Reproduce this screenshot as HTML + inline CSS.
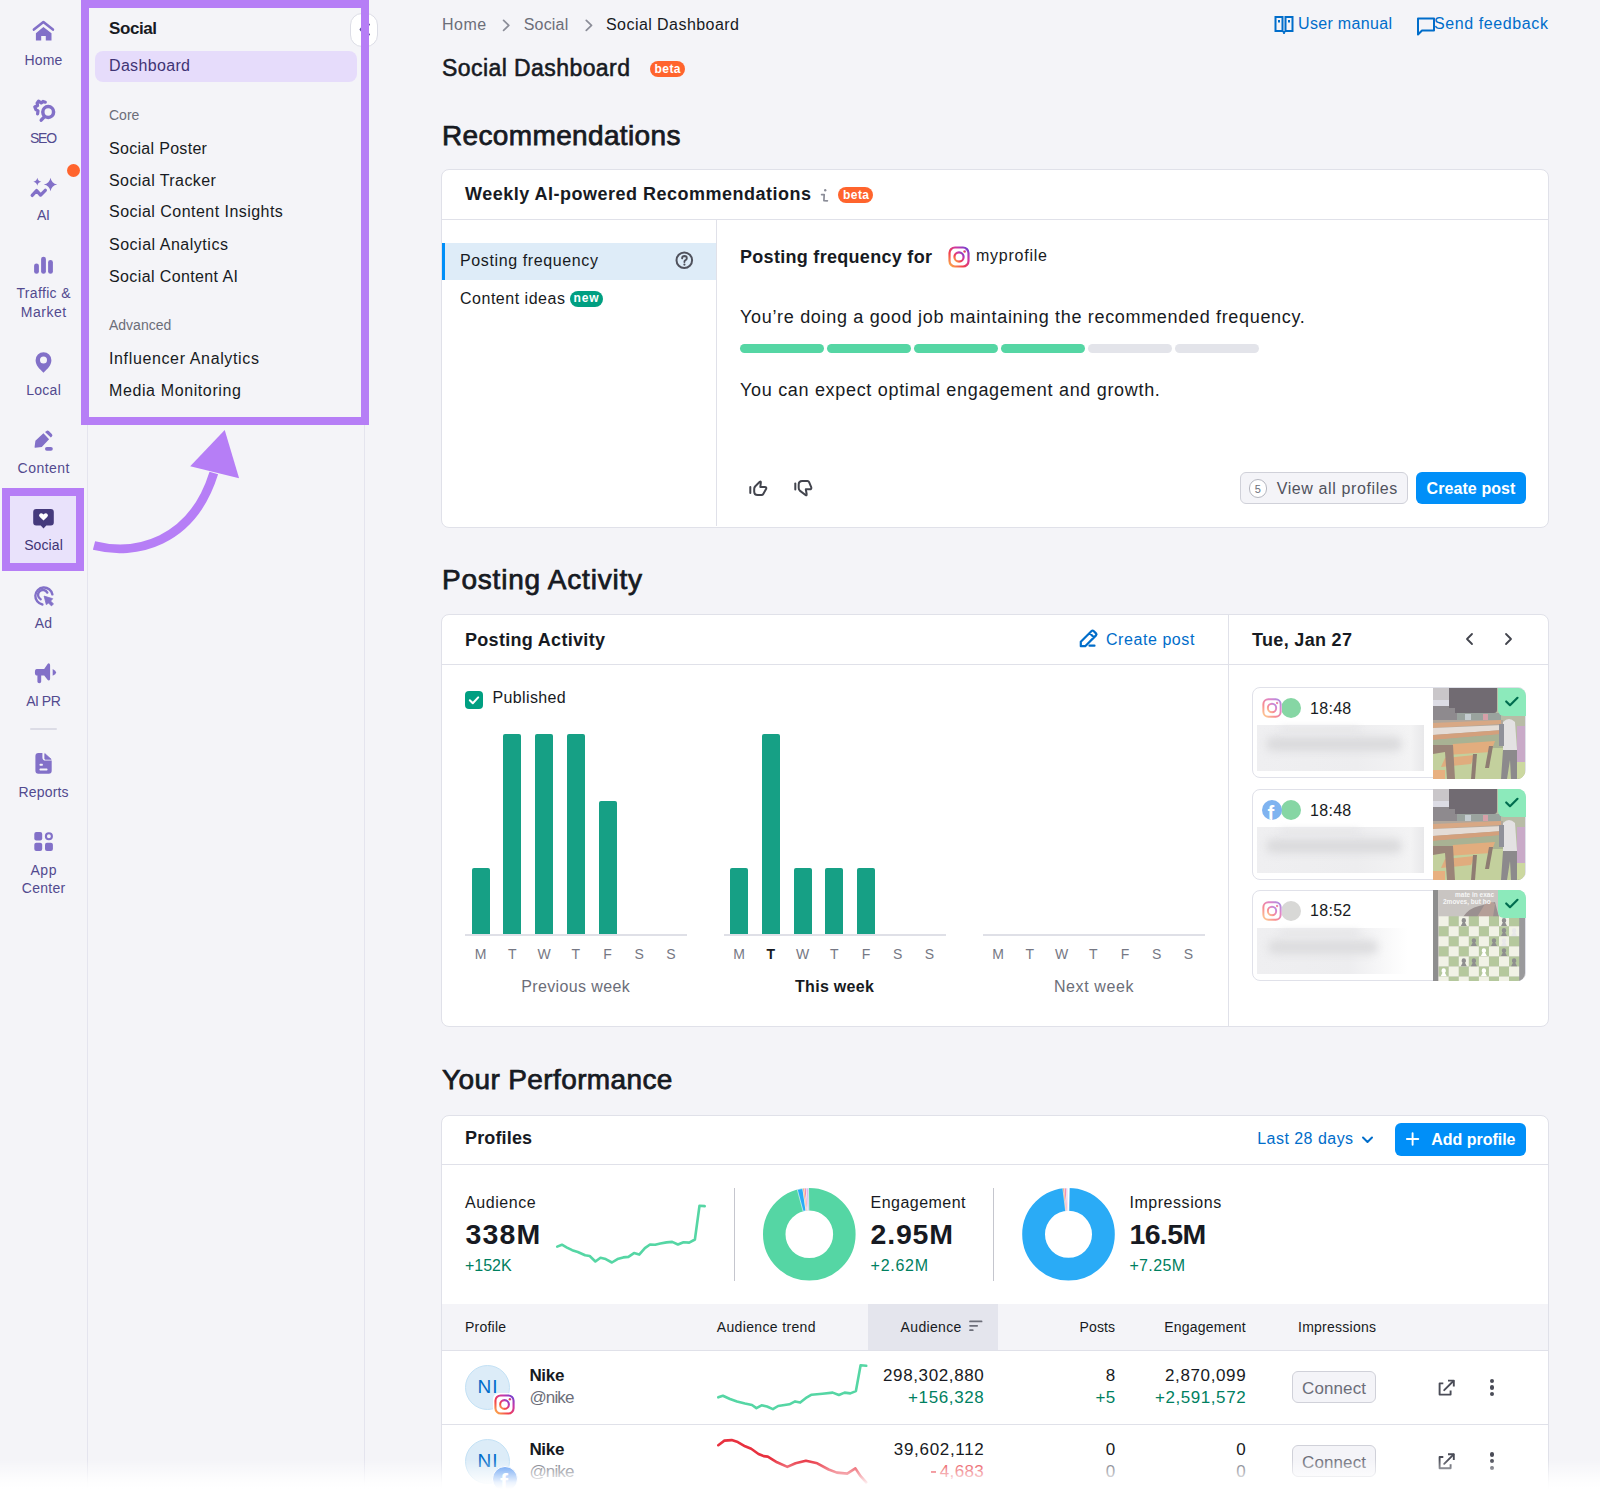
<!DOCTYPE html>
<html><head><meta charset="utf-8">
<style>
html,body{margin:0;padding:0}
body{width:1600px;height:1500px;overflow:hidden;position:relative;background:#f4f4f8;font-family:"Liberation Sans",sans-serif;}
.a{position:absolute}
.t{position:absolute;line-height:1;white-space:nowrap}
svg{overflow:visible}
</style></head><body>
<div class="a" style="left:87px;top:0px;width:1px;height:1500px;background:#e4e4ee"></div>
<div class="a" style="left:364px;top:0px;width:1px;height:1500px;background:#e4e4ee"></div>
<div class="t" style="left:24.60px;top:52.95px;font-size:14px;color:#524a8f;letter-spacing:0.157px;">Home</div>
<div class="t" style="left:29.90px;top:130.85px;font-size:14px;color:#524a8f;letter-spacing:-1.189px;">SEO</div>
<div class="t" style="left:37.10px;top:208.15px;font-size:14px;color:#524a8f;letter-spacing:-0.434px;">AI</div>
<div class="t" style="left:16.50px;top:286.15px;font-size:14px;color:#524a8f;letter-spacing:0.332px;">Traffic &amp;</div>
<div class="t" style="left:20.80px;top:304.65px;font-size:14px;color:#524a8f;letter-spacing:0.527px;">Market</div>
<div class="t" style="left:26.20px;top:383.15px;font-size:14px;color:#524a8f;letter-spacing:0.287px;">Local</div>
<div class="t" style="left:17.60px;top:461.15px;font-size:14px;color:#524a8f;letter-spacing:0.464px;">Content</div>
<div class="t" style="left:26.20px;top:694.15px;font-size:14px;color:#524a8f;letter-spacing:-0.495px;">AI PR</div>
<div class="t" style="left:34.85px;top:616.15px;font-size:14px;color:#524a8f;letter-spacing:0.175px;">Ad</div>
<div class="t" style="left:18.45px;top:784.65px;font-size:14px;color:#524a8f;letter-spacing:0.183px;">Reports</div>
<div class="t" style="left:30.45px;top:863.15px;font-size:14px;color:#524a8f;letter-spacing:0.597px;">App</div>
<div class="t" style="left:21.80px;top:881.15px;font-size:14px;color:#524a8f;letter-spacing:0.280px;">Center</div>
<div class="a" style="left:30px;top:728px;width:27px;height:2px;background:#dcdce6;border-radius:1px"></div>
<div class="a" style="left:66.5px;top:164px;width:13px;height:13px;background:#ff642d;border-radius:50%"></div>
<div class="a" style="left:2px;top:488px;width:82px;height:83px;box-sizing:border-box;border:8px solid #b67ef6;background:#e9e2fb"></div>
<div class="t" style="left:24.15px;top:538.15px;font-size:14px;color:#3f3475;letter-spacing:0.115px;">Social</div>
<div class="t" style="left:109.00px;top:20.31px;font-size:17px;color:#171a22;font-weight:bold;letter-spacing:-0.416px;">Social</div>
<div class="a" style="left:95px;top:51px;width:262px;height:31px;background:#e6dcfb;border-radius:8px"></div>
<div class="t" style="left:109.00px;top:58.16px;font-size:16px;color:#3f3475;letter-spacing:0.334px;">Dashboard</div>
<div class="t" style="left:109.00px;top:107.85px;font-size:14px;color:#6c6e79;">Core</div>
<div class="t" style="left:109.00px;top:140.66px;font-size:16px;color:#171a22;letter-spacing:0.306px;">Social Poster</div>
<div class="t" style="left:109.00px;top:172.56px;font-size:16px;color:#171a22;letter-spacing:0.428px;">Social Tracker</div>
<div class="t" style="left:109.00px;top:204.46px;font-size:16px;color:#171a22;letter-spacing:0.464px;">Social Content Insights</div>
<div class="t" style="left:109.00px;top:237.06px;font-size:16px;color:#171a22;letter-spacing:0.517px;">Social Analytics</div>
<div class="t" style="left:109.00px;top:268.96px;font-size:16px;color:#171a22;letter-spacing:0.384px;">Social Content AI</div>
<div class="t" style="left:109.00px;top:317.95px;font-size:14px;color:#6c6e79;">Advanced</div>
<div class="t" style="left:109.00px;top:351.06px;font-size:16px;color:#171a22;letter-spacing:0.633px;">Influencer Analytics</div>
<div class="t" style="left:109.00px;top:383.46px;font-size:16px;color:#171a22;letter-spacing:0.611px;">Media Monitoring</div>
<div class="a" style="left:81px;top:0px;width:288px;height:425px;box-sizing:border-box;border:8px solid #b67ef6"></div>
<div class="t" style="left:442.00px;top:17.46px;font-size:16px;color:#6c6e79;letter-spacing:0.499px;">Home</div>
<div class="t" style="left:523.70px;top:17.46px;font-size:16px;color:#6c6e79;letter-spacing:0.198px;">Social</div>
<div class="t" style="left:606.00px;top:17.46px;font-size:16px;color:#171a22;letter-spacing:0.441px;">Social Dashboard</div>
<div class="t" style="left:1298.00px;top:16.46px;font-size:16px;color:#006dca;letter-spacing:0.323px;">User manual</div>
<div class="t" style="left:1434.00px;top:16.46px;font-size:16px;color:#006dca;letter-spacing:0.598px;">Send feedback</div>
<div class="t" style="left:442.00px;top:56.93px;font-size:23px;color:#171a22;letter-spacing:0.427px;-webkit-text-stroke:0.55px #171a22;">Social Dashboard</div>
<div class="a" style="left:650px;top:61px;width:35px;height:16px;background:#ff642d;border-radius:8px"></div>
<div class="t" style="left:442.00px;top:121.70px;font-size:28px;color:#171a22;letter-spacing:0.357px;-webkit-text-stroke:0.75px #171a22;">Recommendations</div>
<div class="a" style="left:441px;top:168.5px;width:1108px;height:359px;box-sizing:border-box;border:1px solid #e0e1e9;border-radius:8px;background:#fff"></div>
<svg class="a" style="left:0px;top:0px;" width="88" height="900" viewBox="0 0 88 900">
<g fill="#8270c8" stroke="none">
 <!-- home -->
 <polyline points="33.9,29.6 43.4,22.1 52.9,29.6" fill="none" stroke="#8270c8" stroke-width="2.6" stroke-linecap="round" stroke-linejoin="round"/>
 <path d="M35.9,33.3 L43.4,27.1 L51.5,33.3 L51.5,40.6 L45.8,40.6 L45.8,35.9 L41.2,35.9 L41.2,40.6 L35.9,40.6 Z"/>
 <!-- seo -->
 <circle cx="48.2" cy="112" r="5.4" fill="none" stroke="#8270c8" stroke-width="3.5"/>
 <line x1="41.2" y1="120.2" x2="43.8" y2="117.4" stroke="#8270c8" stroke-width="3.4" stroke-linecap="round"/>
 <path d="M45.3,102.2 L43,101.4 L41.2,102.9 L38.5,101.2 L37.1,103.2 L37.6,105.5 L34.8,107 L35.9,109.6 L38,110.8 L37.6,113.9" fill="none" stroke="#8270c8" stroke-width="3.2" stroke-linecap="round" stroke-linejoin="round"/>
 <!-- ai -->
 <path d="M37.3,177.7 Q37.9,181.1 41.3,181.7 Q37.9,182.3 37.3,185.7 Q36.7,182.3 33.3,181.7 Q36.7,181.1 37.3,177.7 Z"/>
 <path d="M50.5,177.8 Q51.5,183.5 57.2,184.5 Q51.5,185.5 50.5,191.2 Q49.5,185.5 43.8,184.5 Q49.5,183.5 50.5,177.8 Z"/>
 <polyline points="32.2,195.4 36.6,190.6 40.6,195.1 45.3,190.3" fill="none" stroke="#8270c8" stroke-width="3.3" stroke-linecap="round" stroke-linejoin="round"/>
 <!-- traffic -->
 <rect x="34.1" y="263.4" width="4.8" height="10.4" rx="2.4"/>
 <rect x="41.1" y="256.7" width="4.8" height="17.1" rx="2.4"/>
 <rect x="48.1" y="259.9" width="4.8" height="13.9" rx="2.4"/>
 <!-- local -->
 <path fill-rule="evenodd" d="M43.5,372.7 C39.5,368.8 35.6,365.3 35.6,360.2 A7.9,7.9 0 0 1 51.4,360.2 C51.4,365.3 47.5,368.8 43.5,372.7 Z M43.5,356.4 A3.5,3.5 0 1 0 43.5,363.4 A3.5,3.5 0 1 0 43.5,356.4 Z"/>
 <!-- content -->
 <path d="M43.4,433.2 L49.1,439.2 L41.8,446.9 L35.2,447.7 Q34.4,447.9 34.6,447.1 L35.4,440.8 Z"/>
 <path d="M46.2,431.3 Q47.4,430 48.8,431.1 L51.8,434 Q53.1,435.4 51.9,436.6 L50.8,437.6 L45,431.9 Z"/>
 <rect x="45" y="447" width="7.8" height="3.7" rx="1.85"/>
 <!-- ad -->
 <path d="M42.4,604.5 A8.6,8.6 0 1 1 52.4,594.4" fill="none" stroke="#8270c8" stroke-width="2.4" stroke-linecap="round"/>
 <path d="M40.7,599.2 A4.9,4.9 0 1 1 47.3,592.6" fill="none" stroke="#8270c8" stroke-width="2.4" stroke-linecap="round"/>
 <path d="M44.1,596.1 L52.7,598.7 L50.6,601.1 L53.5,603.9 L51.4,605.9 L48.6,603 L46.3,604.6 Z" stroke="#8270c8" stroke-width="0.8" stroke-linejoin="round"/>
 <!-- ai pr -->
 <path d="M36.8,669.1 L44.2,669.1 L47.6,664 Q48.7,662.6 49.6,663.8 Q50.1,664.5 50.1,665.5 L50.1,678.8 Q50.1,680.4 48.9,680.6 Q48.2,680.7 47.5,679.8 L44.2,675.6 L41.2,675.6 L41.2,681.6 Q41.2,683.3 39.3,683.3 Q37.4,683.3 37.4,681.6 L37.4,675.6 Q34.9,675.6 34.9,672.4 Q34.9,669.1 36.8,669.1 Z"/>
 <path d="M52.7,668.9 Q56.1,670.5 56.1,672.4 Q56.1,674.3 52.7,675.8 Z"/>
 <!-- reports -->
 <path fill-rule="evenodd" d="M38.4,753 L42.4,753 L42.4,757.5 Q42.4,760.6 45.5,760.6 L51.7,760.6 L51.7,770.8 Q51.7,773.8 48.7,773.8 L38.4,773.8 Q35.4,773.8 35.4,770.8 L35.4,756 Q35.4,753 38.4,753 Z M40,763.7 L42.4,763.7 Q43.5,764.7 42.4,765.7 L40,765.7 Q38.9,764.7 40,763.7 Z M40,768.4 L47,768.4 Q48.1,769.4 47,770.4 L40,770.4 Q38.9,769.4 40,768.4 Z"/>
 <path d="M44.8,753.6 L51.2,759.3 L45.3,759.3 Q44.8,759.3 44.8,758.8 Z" stroke="#8270c8" stroke-width="0.8" stroke-linejoin="round"/>
 <!-- app center -->
 <rect x="34.3" y="832.1" width="7.9" height="8.3" rx="2"/>
 <circle cx="48.9" cy="836.3" r="3" fill="none" stroke="#8270c8" stroke-width="2.1"/>
 <rect x="34.3" y="842.8" width="7.9" height="8.1" rx="2"/>
 <rect x="45" y="842.8" width="7.9" height="8.1" rx="2"/>
</g>
<!-- social (active) -->
<path d="M36.2,509 L50.8,509 Q53.8,509 53.8,512 L53.8,522.5 Q53.8,525.5 50.8,525.5 L46.3,525.5 L43.5,528.4 L40.7,525.5 L36.2,525.5 Q33.2,525.5 33.2,522.5 L33.2,512 Q33.2,509 36.2,509 Z" fill="#453a7c"/>
<path d="M43.5,520.6 L39.8,517 Q38.3,515.3 39.6,513.9 Q41.2,512.5 43.5,514.4 Q45.8,512.5 47.4,513.9 Q48.7,515.3 47.2,517 Z" fill="#fff"/>
</svg>
<svg class="a" style="left:0px;top:0px;" width="260" height="600" viewBox="0 0 260 600"><path d="M94,545.5 C135,556 192,543 213.8,473" fill="none" stroke="#b67ef6" stroke-width="9"/>
<polygon points="224.7,430.1 190.2,466.2 239.1,478.2" fill="#b67ef6"/></svg>
<div class="a" style="left:350px;top:12.6px;width:28px;height:34px;box-sizing:border-box;border:1px solid #dcdde6;border-radius:12px;background:#fff;z-index:0"></div>
<svg class="a" style="left:350px;top:12px;" width="28" height="36" viewBox="0 0 28 36"><path d="M14.5,12.5 L10.5,17.5 L14.5,22.5 M19,12.5 L15,17.5 L19,22.5" fill="none" stroke="#5b4f9a" stroke-width="2" stroke-linecap="round" stroke-linejoin="round"/></svg>
<div class="a" style="left:361px;top:0;width:8px;height:425px;background:#b67ef6;z-index:2"></div>
<svg class="a" style="left:0px;top:0px;" width="700" height="40" viewBox="0 0 700 40"><path d="M503.6,20.4 L508.8,25.4 L503.6,30.4 M586.3,20.4 L591.5,25.4 L586.3,30.4" fill="none" stroke="#8b8d98" stroke-width="1.7" stroke-linecap="round" stroke-linejoin="round"/></svg>
<svg class="a" style="left:1274px;top:15px;" width="20" height="20" viewBox="0 0 20 20"><path d="M1.5,2 L8.5,2 L8.5,16 L1.5,16 Z M11.5,2 L18.5,2 L18.5,16 L11.5,16 Z" fill="none" stroke="#006dca" stroke-width="2"/><rect x="4" y="5" width="2" height="2.5" fill="#006dca"/><rect x="14" y="5" width="2" height="2.5" fill="#006dca"/><path d="M8.5,16 L10,19 L11.5,16" fill="#006dca" stroke="#006dca" stroke-width="1"/></svg>
<svg class="a" style="left:1416px;top:16px;" width="20" height="20" viewBox="0 0 20 20"><path d="M2,2.5 L18,2.5 L18,14.5 L6,14.5 L2,18.5 Z" fill="none" stroke="#006dca" stroke-width="2" stroke-linejoin="round"/></svg>
<div class="t" style="left:654.50px;top:63.34px;font-size:12px;color:#fff;font-weight:bold;letter-spacing:0.443px;">beta</div>
<div class="t" style="left:465.00px;top:185.26px;font-size:18px;color:#171a22;font-weight:bold;letter-spacing:0.495px;">Weekly AI-powered Recommendations</div>
<svg class="a" style="left:0px;top:0px;" width="1600" height="300" viewBox="0 0 1600 300"><circle cx="825.2" cy="190.3" r="1.2" fill="#8b8d98"/><path d="M821.6,194.6 L824.2,194.6 L823.9,200.6 L827.4,200.8" fill="none" stroke="#8b8d98" stroke-width="1.7" stroke-linejoin="round" stroke-linecap="round"/></svg>
<div class="a" style="left:838.2px;top:186.8px;width:35.3px;height:16px;background:#ff642d;border-radius:8px"></div>
<div class="t" style="left:843.00px;top:188.64px;font-size:12px;color:#fff;font-weight:bold;letter-spacing:0.443px;">beta</div>
<div class="a" style="left:442px;top:219px;width:1106px;height:1px;background:#e0e1e9"></div>
<div class="a" style="left:716px;top:220px;width:1px;height:306px;background:#e0e1e9"></div>
<div class="a" style="left:442px;top:243px;width:274px;height:36.5px;background:#deecf8"></div>
<div class="a" style="left:442px;top:243px;width:2.5px;height:36.5px;background:#008ff8"></div>
<div class="t" style="left:460.00px;top:253.36px;font-size:16px;color:#171a22;letter-spacing:0.614px;">Posting frequency</div>
<svg class="a" style="left:675px;top:251px;" width="19" height="19" viewBox="0 0 19 19"><circle cx="9.3" cy="9.3" r="7.8" fill="none" stroke="#50525d" stroke-width="2"/><path d="M7.1,7.4 Q7.2,5 9.5,5 Q11.8,5.1 11.8,7.2 Q11.8,8.6 10.2,9.3 Q9.4,9.8 9.4,11" fill="none" stroke="#50525d" stroke-width="1.9" stroke-linecap="round"/><circle cx="9.4" cy="13.6" r="1.1" fill="#50525d"/></svg>
<div class="t" style="left:460.00px;top:290.86px;font-size:16px;color:#171a22;letter-spacing:0.514px;">Content ideas</div>
<div class="a" style="left:569.5px;top:290.5px;width:33px;height:16px;background:#009f81;border-radius:8px"></div>
<div class="t" style="left:573.50px;top:292.14px;font-size:12px;color:#fff;font-weight:bold;letter-spacing:0.836px;">new</div>
<div class="t" style="left:740.00px;top:247.76px;font-size:18px;color:#171a22;font-weight:bold;letter-spacing:0.296px;">Posting frequency for</div>
<div class="t" style="left:976.00px;top:248.46px;font-size:16px;color:#171a22;letter-spacing:0.756px;">myprofile</div>
<div class="t" style="left:740.00px;top:307.76px;font-size:18px;color:#171a22;letter-spacing:0.680px;">You’re doing a good job maintaining the recommended frequency.</div>
<div class="a" style="left:740px;top:344px;width:84px;height:8.5px;background:#55d6a4;border-radius:5px"></div>
<div class="a" style="left:827px;top:344px;width:84px;height:8.5px;background:#55d6a4;border-radius:5px"></div>
<div class="a" style="left:914px;top:344px;width:84px;height:8.5px;background:#55d6a4;border-radius:5px"></div>
<div class="a" style="left:1001px;top:344px;width:84px;height:8.5px;background:#55d6a4;border-radius:5px"></div>
<div class="a" style="left:1088px;top:344px;width:84px;height:8.5px;background:#e3e4ea;border-radius:5px"></div>
<div class="a" style="left:1175px;top:344px;width:84px;height:8.5px;background:#e3e4ea;border-radius:5px"></div>
<div class="t" style="left:740.00px;top:380.56px;font-size:18px;color:#171a22;letter-spacing:0.688px;">You can expect optimal engagement and growth.</div>
<div class="a" style="left:1240px;top:472px;width:167.5px;height:32px;box-sizing:border-box;border:1px solid #d0d1d9;border-radius:6px;background:#f4f4f8"></div>
<div class="a" style="left:1248.5px;top:479px;width:18.5px;height:18.5px;box-sizing:border-box;border:1px solid #b5b7c0;border-radius:50%;background:#fff"></div>
<div class="t" style="left:1254.74px;top:483.69px;font-size:11px;color:#6c6e79;">5</div>
<div class="t" style="left:1276.70px;top:481.36px;font-size:16px;color:#50525d;letter-spacing:0.613px;">View all profiles</div>
<div class="a" style="left:1416px;top:472px;width:110px;height:32px;background:#008ff8;border-radius:6px"></div>
<div class="t" style="left:1426.50px;top:481.36px;font-size:16px;color:#fff;font-weight:bold;letter-spacing:0.091px;">Create post</div>
<div class="t" style="left:442.00px;top:565.80px;font-size:28px;color:#171a22;letter-spacing:0.779px;-webkit-text-stroke:0.75px #171a22;">Posting Activity</div>
<div class="a" style="left:441px;top:613.5px;width:1108px;height:413.5px;box-sizing:border-box;border:1px solid #e0e1e9;border-radius:8px;background:#fff"></div>
<div class="a" style="left:442px;top:664px;width:1106px;height:1px;background:#e0e1e9"></div>
<div class="a" style="left:1228px;top:614.5px;width:1px;height:412px;background:#e0e1e9"></div>
<div class="t" style="left:465.00px;top:630.51px;font-size:18px;color:#171a22;font-weight:bold;letter-spacing:0.307px;">Posting Activity</div>
<svg class="a" style="left:1078px;top:628px;" width="22" height="22" viewBox="0 0 22 22"><path d="M2.8,18.2 L2.8,13.8 L13.6,3 Q14.6,2 15.6,3 L18,5.4 Q19,6.4 18,7.4 L7.2,18.2 Z M11.8,5.2 L15.8,9.2" fill="none" stroke="#006dca" stroke-width="2.2" stroke-linejoin="round"/><path d="M11.5,17.7 L16.5,17.7" stroke="#006dca" stroke-width="2.2" stroke-linecap="round"/></svg>
<div class="t" style="left:1106.00px;top:631.96px;font-size:16px;color:#006dca;letter-spacing:0.562px;">Create post</div>
<div class="t" style="left:1252.00px;top:630.86px;font-size:18px;color:#171a22;font-weight:bold;letter-spacing:0.325px;">Tue, Jan 27</div>
<svg class="a" style="left:1460px;top:628px;" width="60" height="22" viewBox="0 0 60 22"><path d="M12,6 L7,11 L12,16 M46,6 L51,11 L46,16" fill="none" stroke="#42444d" stroke-width="1.8" stroke-linecap="round" stroke-linejoin="round"/></svg>
<div class="a" style="left:464.5px;top:690.5px;width:18px;height:18px;background:#009f81;border-radius:4px"></div>
<svg class="a" style="left:464.5px;top:690.5px;" width="18" height="18" viewBox="0 0 18 18"><path d="M4.8,9.2 L7.8,12.2 L13.2,6.4" fill="none" stroke="#fff" stroke-width="2" stroke-linecap="round" stroke-linejoin="round"/></svg>
<div class="t" style="left:492.50px;top:690.21px;font-size:16px;color:#171a22;letter-spacing:0.365px;">Published</div>
<div class="a" style="left:464.5px;top:934px;width:222.5px;height:2px;background:#dfe0e7"></div>
<div class="a" style="left:471.5px;top:867.5px;width:18px;height:66.5px;background:#16a085;border-radius:2px 2px 0 0"></div>
<div class="a" style="left:503.25px;top:734px;width:18px;height:200px;background:#16a085;border-radius:2px 2px 0 0"></div>
<div class="a" style="left:535.0px;top:734px;width:18px;height:200px;background:#16a085;border-radius:2px 2px 0 0"></div>
<div class="a" style="left:566.75px;top:734px;width:18px;height:200px;background:#16a085;border-radius:2px 2px 0 0"></div>
<div class="a" style="left:598.5px;top:801px;width:18px;height:133px;background:#16a085;border-radius:2px 2px 0 0"></div>
<div class="t" style="left:474.67px;top:946.95px;font-size:14px;color:#767884;">M</div>
<div class="t" style="left:507.98px;top:946.95px;font-size:14px;color:#767884;">T</div>
<div class="t" style="left:537.39px;top:946.95px;font-size:14px;color:#767884;">W</div>
<div class="t" style="left:571.48px;top:946.95px;font-size:14px;color:#767884;">T</div>
<div class="t" style="left:603.23px;top:946.95px;font-size:14px;color:#767884;">F</div>
<div class="t" style="left:634.58px;top:946.95px;font-size:14px;color:#767884;">S</div>
<div class="t" style="left:666.33px;top:946.95px;font-size:14px;color:#767884;">S</div>
<div class="t" style="left:521.15px;top:978.66px;font-size:16px;color:#6c6e79;letter-spacing:0.383px;">Previous week</div>
<div class="a" style="left:723.5px;top:934px;width:222.5px;height:2px;background:#dfe0e7"></div>
<div class="a" style="left:730.0px;top:867.5px;width:18px;height:66.5px;background:#16a085;border-radius:2px 2px 0 0"></div>
<div class="a" style="left:761.75px;top:734px;width:18px;height:200px;background:#16a085;border-radius:2px 2px 0 0"></div>
<div class="a" style="left:793.5px;top:867.5px;width:18px;height:66.5px;background:#16a085;border-radius:2px 2px 0 0"></div>
<div class="a" style="left:825.25px;top:867.5px;width:18px;height:66.5px;background:#16a085;border-radius:2px 2px 0 0"></div>
<div class="a" style="left:857.0px;top:867.5px;width:18px;height:66.5px;background:#16a085;border-radius:2px 2px 0 0"></div>
<div class="t" style="left:733.17px;top:946.95px;font-size:14px;color:#767884;">M</div>
<div class="t" style="left:766.48px;top:946.95px;font-size:14px;color:#171a22;font-weight:bold;">T</div>
<div class="t" style="left:795.89px;top:946.95px;font-size:14px;color:#767884;">W</div>
<div class="t" style="left:829.98px;top:946.95px;font-size:14px;color:#767884;">T</div>
<div class="t" style="left:861.73px;top:946.95px;font-size:14px;color:#767884;">F</div>
<div class="t" style="left:893.08px;top:946.95px;font-size:14px;color:#767884;">S</div>
<div class="t" style="left:924.83px;top:946.95px;font-size:14px;color:#767884;">S</div>
<div class="t" style="left:795.00px;top:978.66px;font-size:16px;color:#171a22;font-weight:bold;letter-spacing:0.307px;">This week</div>
<div class="a" style="left:982.5px;top:934px;width:222.5px;height:2px;background:#dfe0e7"></div>
<div class="t" style="left:992.17px;top:946.95px;font-size:14px;color:#767884;">M</div>
<div class="t" style="left:1025.48px;top:946.95px;font-size:14px;color:#767884;">T</div>
<div class="t" style="left:1054.89px;top:946.95px;font-size:14px;color:#767884;">W</div>
<div class="t" style="left:1088.98px;top:946.95px;font-size:14px;color:#767884;">T</div>
<div class="t" style="left:1120.73px;top:946.95px;font-size:14px;color:#767884;">F</div>
<div class="t" style="left:1152.08px;top:946.95px;font-size:14px;color:#767884;">S</div>
<div class="t" style="left:1183.83px;top:946.95px;font-size:14px;color:#767884;">S</div>
<div class="t" style="left:1053.95px;top:978.66px;font-size:16px;color:#6c6e79;letter-spacing:0.594px;">Next week</div>
<svg class="a" style="left:0px;top:0px;" width="1" height="1" viewBox="0 0 1 1"><defs><linearGradient id="igg" x1="0" y1="1" x2="1" y2="0"><stop offset="0" stop-color="#fdb44b"/><stop offset="0.35" stop-color="#f2404d"/><stop offset="0.7" stop-color="#c937a7"/><stop offset="1" stop-color="#6443d6"/></linearGradient></defs></svg>
<svg class="a" style="left:948px;top:245.5px;" width="22" height="22" viewBox="0 0 22 22"><g transform="scale(1.0)" opacity="1.0"><rect x="1.5" y="1.5" width="19" height="19" rx="5.5" fill="none" stroke="url(#igg)" stroke-width="2.2"/><circle cx="11" cy="11" r="4.6" fill="none" stroke="url(#igg)" stroke-width="2.2"/><circle cx="16.6" cy="5.5" r="1.3" fill="url(#igg)"/></g></svg>
<div class="a" style="left:1251.5px;top:687px;width:274px;height:91px;box-sizing:border-box;border:1px solid #e0e1e9;border-radius:8px;background:#fff"></div>
<div class="a" style="left:1257px;top:725px;width:167px;height:46px;background:linear-gradient(90deg,#efeff1,#ededef 60%,#f3f3f4 92%,#e8e8ea 100%);"></div>
<div class="a" style="left:1266px;top:737px;width:136px;height:14px;background:#dadadc;border-radius:7px;filter:blur(4px)"></div>
<div class="a" style="left:1280px;top:727px;width:80px;height:6px;background:#e6e6e8;border-radius:3px;filter:blur(3px)"></div>
<div class="a" style="left:1281px;top:698px;width:20px;height:20px;background:#86d6a4;border-radius:50%"></div>
<div class="a" style="left:1261px;top:697.5px;width:21px;height:21px;background:#fff;border-radius:6px"></div>
<svg class="a" style="left:1262px;top:698px;" width="20" height="20" viewBox="0 0 20 20"><g transform="scale(0.9090909090909091)" opacity="0.6"><rect x="1.5" y="1.5" width="19" height="19" rx="5.5" fill="none" stroke="url(#igg)" stroke-width="2.2"/><circle cx="11" cy="11" r="4.6" fill="none" stroke="url(#igg)" stroke-width="2.2"/><circle cx="16.6" cy="5.5" r="1.3" fill="url(#igg)"/></g></svg>
<div class="t" style="left:1310.00px;top:700.86px;font-size:16px;color:#171a22;letter-spacing:0.305px;">18:48</div>
<div class="a" style="left:1433px;top:687.5px;width:92px;height:91px;overflow:hidden;border-radius:0 8px 8px 0"><svg width="92" height="91" viewBox="0 0 92 91" style="display:block">
<rect x="0" y="0" width="92" height="91" fill="#b8bca6"/>
<rect x="0" y="0" width="18" height="26" fill="#c9c6c9"/>
<rect x="0" y="12" width="22" height="6" fill="#dcdce4"/>
<rect x="0" y="18" width="24" height="14" fill="#8e8a8e"/>
<path d="M16,0 H64 V22 Q64,25 61,25 H22 V20 H16 Z" fill="#716b72"/>
<rect x="24" y="25" width="44" height="10" fill="#9aa39e"/>
<rect x="32" y="26" width="6" height="9" fill="#c4ccd0"/>
<rect x="50" y="26" width="5" height="9" fill="#d6a0a8"/>
<rect x="0" y="32" width="70" height="20" fill="#b1a79c"/>
<path d="M0,35 L68,32 L68,36 L0,40 Z" fill="#d8a884"/>
<path d="M0,40 L70,37 L70,42 L0,47 Z" fill="#e4dcd6"/>
<path d="M0,47 L70,42 L70,46 L0,52 Z" fill="#d3a07c"/>
<path d="M0,52 L70,46 L70,60 L0,64 Z" fill="#a9b293"/>
<rect x="0" y="60" width="92" height="31" fill="#c3d09d"/>
<path d="M20,56 L62,53 L58,64 L14,67 Z" fill="#e2ad7e"/>
<path d="M12,70 L42,67 L38,76 L8,79 Z" fill="#e0ac7e"/>
<path d="M0,57 L20,57 L22,91 L14,91 L12,64 L0,66 Z" fill="#9a8478"/>
<path d="M40,66 L44,66 L42,91 L38,91 Z" fill="#8e7c72"/>
<path d="M56,58 L60,58 L56,80 L52,80 Z" fill="#8e7c72"/>
<rect x="0" y="82" width="12" height="9" fill="#e8b080"/>
<path d="M70,34 Q76,28 82,34 L84,62 L70,62 Z" fill="#e3e1e2"/>
<rect x="66" y="36" width="5" height="22" fill="#8f9099"/>
<path d="M70,62 L84,62 L86,91 L78,91 L77,72 L74,91 L68,91 Z" fill="#8c8a8c"/>
<rect x="84" y="38" width="8" height="36" fill="#c9aac8"/>
<rect x="84" y="74" width="8" height="17" fill="#ccd8a0"/>
</svg></div>
<div class="a" style="left:1497.5px;top:687.5px;width:28px;height:28px;background:#8ceabb;border-radius:0 8px 0 6px"></div>
<svg class="a" style="left:1497.5px;top:687.5px;" width="28" height="28" viewBox="0 0 28 28"><path d="M8.2,13.5 L12,17.2 L19.5,9.8" fill="none" stroke="#006d4f" stroke-width="2.2" stroke-linecap="round" stroke-linejoin="round"/></svg>
<div class="a" style="left:1251.5px;top:788.8px;width:274px;height:91px;box-sizing:border-box;border:1px solid #e0e1e9;border-radius:8px;background:#fff"></div>
<div class="a" style="left:1257px;top:826.8px;width:167px;height:46px;background:linear-gradient(90deg,#efeff1,#ededef 60%,#f3f3f4 92%,#e8e8ea 100%);"></div>
<div class="a" style="left:1266px;top:838.8px;width:136px;height:14px;background:#dadadc;border-radius:7px;filter:blur(4px)"></div>
<div class="a" style="left:1280px;top:828.8px;width:80px;height:6px;background:#e6e6e8;border-radius:3px;filter:blur(3px)"></div>
<div class="a" style="left:1281px;top:799.8px;width:20px;height:20px;background:#86d6a4;border-radius:50%"></div>
<div class="a" style="left:1262px;top:799.8px;width:20px;height:20px;border-radius:50%;background:#7fb3f0;overflow:hidden"><div class="t" style="left:5.5px;top:3px;font-size:20px;font-weight:bold;color:#fff;line-height:20px">f</div></div>
<div class="t" style="left:1310.00px;top:802.66px;font-size:16px;color:#171a22;letter-spacing:0.305px;">18:48</div>
<div class="a" style="left:1433px;top:789.3px;width:92px;height:91px;overflow:hidden;border-radius:0 8px 8px 0"><svg width="92" height="91" viewBox="0 0 92 91" style="display:block">
<rect x="0" y="0" width="92" height="91" fill="#b8bca6"/>
<rect x="0" y="0" width="18" height="26" fill="#c9c6c9"/>
<rect x="0" y="12" width="22" height="6" fill="#dcdce4"/>
<rect x="0" y="18" width="24" height="14" fill="#8e8a8e"/>
<path d="M16,0 H64 V22 Q64,25 61,25 H22 V20 H16 Z" fill="#716b72"/>
<rect x="24" y="25" width="44" height="10" fill="#9aa39e"/>
<rect x="32" y="26" width="6" height="9" fill="#c4ccd0"/>
<rect x="50" y="26" width="5" height="9" fill="#d6a0a8"/>
<rect x="0" y="32" width="70" height="20" fill="#b1a79c"/>
<path d="M0,35 L68,32 L68,36 L0,40 Z" fill="#d8a884"/>
<path d="M0,40 L70,37 L70,42 L0,47 Z" fill="#e4dcd6"/>
<path d="M0,47 L70,42 L70,46 L0,52 Z" fill="#d3a07c"/>
<path d="M0,52 L70,46 L70,60 L0,64 Z" fill="#a9b293"/>
<rect x="0" y="60" width="92" height="31" fill="#c3d09d"/>
<path d="M20,56 L62,53 L58,64 L14,67 Z" fill="#e2ad7e"/>
<path d="M12,70 L42,67 L38,76 L8,79 Z" fill="#e0ac7e"/>
<path d="M0,57 L20,57 L22,91 L14,91 L12,64 L0,66 Z" fill="#9a8478"/>
<path d="M40,66 L44,66 L42,91 L38,91 Z" fill="#8e7c72"/>
<path d="M56,58 L60,58 L56,80 L52,80 Z" fill="#8e7c72"/>
<rect x="0" y="82" width="12" height="9" fill="#e8b080"/>
<path d="M70,34 Q76,28 82,34 L84,62 L70,62 Z" fill="#e3e1e2"/>
<rect x="66" y="36" width="5" height="22" fill="#8f9099"/>
<path d="M70,62 L84,62 L86,91 L78,91 L77,72 L74,91 L68,91 Z" fill="#8c8a8c"/>
<rect x="84" y="38" width="8" height="36" fill="#c9aac8"/>
<rect x="84" y="74" width="8" height="17" fill="#ccd8a0"/>
</svg></div>
<div class="a" style="left:1497.5px;top:789.3px;width:28px;height:28px;background:#8ceabb;border-radius:0 8px 0 6px"></div>
<svg class="a" style="left:1497.5px;top:789.3px;" width="28" height="28" viewBox="0 0 28 28"><path d="M8.2,13.5 L12,17.2 L19.5,9.8" fill="none" stroke="#006d4f" stroke-width="2.2" stroke-linecap="round" stroke-linejoin="round"/></svg>
<div class="a" style="left:1251.5px;top:889.6px;width:274px;height:91px;box-sizing:border-box;border:1px solid #e0e1e9;border-radius:8px;background:#fff"></div>
<div class="a" style="left:1257px;top:927.6px;width:167px;height:46px;background:linear-gradient(90deg,#efeff1 0,#ededef 55%,rgba(255,255,255,0) 90%);"></div>
<div class="a" style="left:1268px;top:939.6px;width:110px;height:14px;background:#dcdcde;border-radius:7px;filter:blur(4px)"></div>
<div class="a" style="left:1280px;top:929.6px;width:80px;height:6px;background:#e6e6e8;border-radius:3px;filter:blur(3px)"></div>
<div class="a" style="left:1281px;top:900.6px;width:20px;height:20px;background:#d8d8d6;border-radius:50%"></div>
<div class="a" style="left:1261px;top:900.1px;width:21px;height:21px;background:#fff;border-radius:6px"></div>
<svg class="a" style="left:1262px;top:900.6px;" width="20" height="20" viewBox="0 0 20 20"><g transform="scale(0.9090909090909091)" opacity="0.6"><rect x="1.5" y="1.5" width="19" height="19" rx="5.5" fill="none" stroke="url(#igg)" stroke-width="2.2"/><circle cx="11" cy="11" r="4.6" fill="none" stroke="url(#igg)" stroke-width="2.2"/><circle cx="16.6" cy="5.5" r="1.3" fill="url(#igg)"/></g></svg>
<div class="t" style="left:1310.00px;top:903.46px;font-size:16px;color:#171a22;letter-spacing:0.305px;">18:52</div>
<div class="a" style="left:1433px;top:890.1px;width:92px;height:91px;overflow:hidden;border-radius:0 8px 8px 0"><svg width="92" height="91" viewBox="0 0 92 91" style="display:block">
<rect x="0" y="0" width="92" height="91" fill="#c6c2bf"/>
<rect x="0" y="0" width="92" height="27" fill="#c9c5c2"/>
<path d="M30,27 Q36,18 46,16 L62,12 L66,27 Z" fill="#9a9090"/>
<path d="M44,27 L52,14 Q58,10 62,14 L60,27 Z" fill="#b59f98"/>
<rect x="0" y="0" width="5" height="91" fill="#8e8e8e"/>
<rect x="86" y="27" width="6" height="64" fill="#9a9a9c"/>
<rect x="5.70" y="26.30" width="10.1" height="10.1" fill="#f1f2e6"/><rect x="15.75" y="26.30" width="10.1" height="10.1" fill="#b5c89d"/><rect x="25.80" y="26.30" width="10.1" height="10.1" fill="#f1f2e6"/><rect x="35.85" y="26.30" width="10.1" height="10.1" fill="#b5c89d"/><rect x="45.90" y="26.30" width="10.1" height="10.1" fill="#f1f2e6"/><rect x="55.95" y="26.30" width="10.1" height="10.1" fill="#b5c89d"/><rect x="66.00" y="26.30" width="10.1" height="10.1" fill="#f1f2e6"/><rect x="76.05" y="26.30" width="10.1" height="10.1" fill="#b5c89d"/><rect x="5.70" y="36.35" width="10.1" height="10.1" fill="#b5c89d"/><rect x="15.75" y="36.35" width="10.1" height="10.1" fill="#f1f2e6"/><rect x="25.80" y="36.35" width="10.1" height="10.1" fill="#b5c89d"/><rect x="35.85" y="36.35" width="10.1" height="10.1" fill="#f1f2e6"/><rect x="45.90" y="36.35" width="10.1" height="10.1" fill="#b5c89d"/><rect x="55.95" y="36.35" width="10.1" height="10.1" fill="#f1f2e6"/><rect x="66.00" y="36.35" width="10.1" height="10.1" fill="#b5c89d"/><rect x="76.05" y="36.35" width="10.1" height="10.1" fill="#f1f2e6"/><rect x="5.70" y="46.40" width="10.1" height="10.1" fill="#f1f2e6"/><rect x="15.75" y="46.40" width="10.1" height="10.1" fill="#b5c89d"/><rect x="25.80" y="46.40" width="10.1" height="10.1" fill="#f1f2e6"/><rect x="35.85" y="46.40" width="10.1" height="10.1" fill="#b5c89d"/><rect x="45.90" y="46.40" width="10.1" height="10.1" fill="#f1f2e6"/><rect x="55.95" y="46.40" width="10.1" height="10.1" fill="#b5c89d"/><rect x="66.00" y="46.40" width="10.1" height="10.1" fill="#f1f2e6"/><rect x="76.05" y="46.40" width="10.1" height="10.1" fill="#b5c89d"/><rect x="5.70" y="56.45" width="10.1" height="10.1" fill="#b5c89d"/><rect x="15.75" y="56.45" width="10.1" height="10.1" fill="#f1f2e6"/><rect x="25.80" y="56.45" width="10.1" height="10.1" fill="#b5c89d"/><rect x="35.85" y="56.45" width="10.1" height="10.1" fill="#f1f2e6"/><rect x="45.90" y="56.45" width="10.1" height="10.1" fill="#b5c89d"/><rect x="55.95" y="56.45" width="10.1" height="10.1" fill="#f1f2e6"/><rect x="66.00" y="56.45" width="10.1" height="10.1" fill="#b5c89d"/><rect x="76.05" y="56.45" width="10.1" height="10.1" fill="#f1f2e6"/><rect x="5.70" y="66.50" width="10.1" height="10.1" fill="#f1f2e6"/><rect x="15.75" y="66.50" width="10.1" height="10.1" fill="#b5c89d"/><rect x="25.80" y="66.50" width="10.1" height="10.1" fill="#f1f2e6"/><rect x="35.85" y="66.50" width="10.1" height="10.1" fill="#b5c89d"/><rect x="45.90" y="66.50" width="10.1" height="10.1" fill="#f1f2e6"/><rect x="55.95" y="66.50" width="10.1" height="10.1" fill="#b5c89d"/><rect x="66.00" y="66.50" width="10.1" height="10.1" fill="#f1f2e6"/><rect x="76.05" y="66.50" width="10.1" height="10.1" fill="#b5c89d"/><rect x="5.70" y="76.55" width="10.1" height="10.1" fill="#b5c89d"/><rect x="15.75" y="76.55" width="10.1" height="10.1" fill="#f1f2e6"/><rect x="25.80" y="76.55" width="10.1" height="10.1" fill="#b5c89d"/><rect x="35.85" y="76.55" width="10.1" height="10.1" fill="#f1f2e6"/><rect x="45.90" y="76.55" width="10.1" height="10.1" fill="#b5c89d"/><rect x="55.95" y="76.55" width="10.1" height="10.1" fill="#f1f2e6"/><rect x="66.00" y="76.55" width="10.1" height="10.1" fill="#b5c89d"/><rect x="76.05" y="76.55" width="10.1" height="10.1" fill="#f1f2e6"/><rect x="5.70" y="86.60" width="10.1" height="10.1" fill="#f1f2e6"/><rect x="15.75" y="86.60" width="10.1" height="10.1" fill="#b5c89d"/><rect x="25.80" y="86.60" width="10.1" height="10.1" fill="#f1f2e6"/><rect x="35.85" y="86.60" width="10.1" height="10.1" fill="#b5c89d"/><rect x="45.90" y="86.60" width="10.1" height="10.1" fill="#f1f2e6"/><rect x="55.95" y="86.60" width="10.1" height="10.1" fill="#b5c89d"/><rect x="66.00" y="86.60" width="10.1" height="10.1" fill="#f1f2e6"/><rect x="76.05" y="86.60" width="10.1" height="10.1" fill="#b5c89d"/><path d="M30.8,28.1 q2.2,0 2.2,2.4 q0,1.4 -1,2 l1.8,3.5 h-6 l1.8,-3.5 q-1,-0.6 -1,-2 q0,-2.4 2.2,-2.4 z" fill="#8f8f8f"/><path d="M71.0,28.1 q2.2,0 2.2,2.4 q0,1.4 -1,2 l1.8,3.5 h-6 l1.8,-3.5 q-1,-0.6 -1,-2 q0,-2.4 2.2,-2.4 z" fill="#8f8f8f"/><path d="M71.0,38.1 q2.2,0 2.2,2.4 q0,1.4 -1,2 l1.8,3.5 h-6 l1.8,-3.5 q-1,-0.6 -1,-2 q0,-2.4 2.2,-2.4 z" fill="#8f8f8f"/><path d="M81.1,38.1 q2.2,0 2.2,2.4 q0,1.4 -1,2 l1.8,3.5 h-6 l1.8,-3.5 q-1,-0.6 -1,-2 q0,-2.4 2.2,-2.4 z" fill="#e8e8e8"/><path d="M40.9,48.2 q2.2,0 2.2,2.4 q0,1.4 -1,2 l1.8,3.5 h-6 l1.8,-3.5 q-1,-0.6 -1,-2 q0,-2.4 2.2,-2.4 z" fill="#8f8f8f"/><path d="M61.0,48.2 q2.2,0 2.2,2.4 q0,1.4 -1,2 l1.8,3.5 h-6 l1.8,-3.5 q-1,-0.6 -1,-2 q0,-2.4 2.2,-2.4 z" fill="#8f8f8f"/><path d="M71.0,48.2 q2.2,0 2.2,2.4 q0,1.4 -1,2 l1.8,3.5 h-6 l1.8,-3.5 q-1,-0.6 -1,-2 q0,-2.4 2.2,-2.4 z" fill="#e8e8e8"/><path d="M50.9,58.2 q2.2,0 2.2,2.4 q0,1.4 -1,2 l1.8,3.5 h-6 l1.8,-3.5 q-1,-0.6 -1,-2 q0,-2.4 2.2,-2.4 z" fill="#ffffff"/><path d="M71.0,58.2 q2.2,0 2.2,2.4 q0,1.4 -1,2 l1.8,3.5 h-6 l1.8,-3.5 q-1,-0.6 -1,-2 q0,-2.4 2.2,-2.4 z" fill="#8f8f8f"/><path d="M30.8,68.3 q2.2,0 2.2,2.4 q0,1.4 -1,2 l1.8,3.5 h-6 l1.8,-3.5 q-1,-0.6 -1,-2 q0,-2.4 2.2,-2.4 z" fill="#8f8f8f"/><path d="M40.9,68.3 q2.2,0 2.2,2.4 q0,1.4 -1,2 l1.8,3.5 h-6 l1.8,-3.5 q-1,-0.6 -1,-2 q0,-2.4 2.2,-2.4 z" fill="#8f8f8f"/><path d="M81.1,68.3 q2.2,0 2.2,2.4 q0,1.4 -1,2 l1.8,3.5 h-6 l1.8,-3.5 q-1,-0.6 -1,-2 q0,-2.4 2.2,-2.4 z" fill="#8f8f8f"/><path d="M10.7,78.3 q2.2,0 2.2,2.4 q0,1.4 -1,2 l1.8,3.5 h-6 l1.8,-3.5 q-1,-0.6 -1,-2 q0,-2.4 2.2,-2.4 z" fill="#ffffff"/><path d="M50.9,78.3 q2.2,0 2.2,2.4 q0,1.4 -1,2 l1.8,3.5 h-6 l1.8,-3.5 q-1,-0.6 -1,-2 q0,-2.4 2.2,-2.4 z" fill="#ffffff"/>
<text x="22" y="6.5" font-size="6.5" font-weight="bold" fill="#f6f6f6" font-family="Liberation Sans">mate in exac</text>
<text x="10" y="14" font-size="6.5" font-weight="bold" fill="#f6f6f6" font-family="Liberation Sans">2moves, but ho</text>
</svg></div>
<div class="a" style="left:1497.5px;top:890.1px;width:28px;height:28px;background:#8ceabb;border-radius:0 8px 0 6px"></div>
<svg class="a" style="left:1497.5px;top:890.1px;" width="28" height="28" viewBox="0 0 28 28"><path d="M8.2,13.5 L12,17.2 L19.5,9.8" fill="none" stroke="#006d4f" stroke-width="2.2" stroke-linecap="round" stroke-linejoin="round"/></svg>
<div class="t" style="left:442.00px;top:1065.70px;font-size:28px;color:#171a22;letter-spacing:0.386px;-webkit-text-stroke:0.75px #171a22;">Your Performance</div>
<div class="a" style="left:441px;top:1114.5px;width:1108px;height:400px;box-sizing:border-box;border:1px solid #e0e1e9;border-radius:8px;background:#fff"></div>
<div class="a" style="left:442px;top:1163.5px;width:1106px;height:1px;background:#e0e1e9"></div>
<div class="t" style="left:465.00px;top:1128.51px;font-size:18px;color:#171a22;font-weight:bold;letter-spacing:0.153px;">Profiles</div>
<div class="t" style="left:1257.20px;top:1131.46px;font-size:16px;color:#006dca;letter-spacing:0.473px;">Last 28 days</div>
<svg class="a" style="left:1360px;top:1132px;" width="16" height="16" viewBox="0 0 16 16"><path d="M3,5.5 L7.5,10 L12,5.5" fill="none" stroke="#006dca" stroke-width="2" stroke-linecap="round" stroke-linejoin="round"/></svg>
<div class="a" style="left:1395px;top:1123.4px;width:131px;height:32.3px;background:#008ff8;border-radius:6px"></div>
<svg class="a" style="left:0px;top:0px;" width="1600" height="1500" viewBox="0 0 1600 1500"><path d="M1412.6,1133.3 L1412.6,1144.7 M1406.9,1139 L1418.3,1139" stroke="#fff" stroke-width="1.9" stroke-linecap="round"/></svg>
<div class="t" style="left:1431.20px;top:1131.66px;font-size:16px;color:#fff;font-weight:bold;letter-spacing:-0.012px;">Add profile</div>
<div class="t" style="left:465.00px;top:1194.66px;font-size:16px;color:#171a22;letter-spacing:0.562px;">Audience</div>
<div class="t" style="left:465.50px;top:1219.77px;font-size:28.5px;color:#171a22;font-weight:bold;letter-spacing:1.145px;">338M</div>
<div class="t" style="left:465.00px;top:1257.66px;font-size:16px;color:#00805f;letter-spacing:-0.009px;">+152K</div>
<div class="a" style="left:734.2px;top:1188px;width:1.2px;height:92.5px;background:#c5c6ce"></div>
<div class="a" style="left:993.2px;top:1188px;width:1.2px;height:92.5px;background:#c5c6ce"></div>
<svg class="a" style="left:0px;top:0px;pointer-events:none" width="1600" height="1500" viewBox="0 0 1600 1500"><polyline points="557.2,1246.6 561.9,1244.7 567.0,1247.6 572.2,1250.2 577.8,1252.0 585.1,1255.3 589.7,1256.0 595.4,1261.5 600.5,1257.7 605.7,1259.1 611.9,1262.5 617.5,1259.1 623.2,1257.4 628.4,1256.9 634.0,1253.1 639.2,1254.6 644.9,1248.1 650.0,1244.5 655.2,1244.7 660.3,1243.5 666.5,1242.4 672.2,1241.9 677.9,1244.5 683.5,1242.2 689.2,1242.6 694.9,1239.5 699.5,1205.8 704.7,1206.1" fill="none" stroke="#55d6a4" stroke-width="2.6" stroke-linejoin="round" stroke-linecap="round"/></svg>
<svg class="a" style="left:0px;top:0px;" width="1600" height="1500" viewBox="0 0 1600 1500"><circle cx="809.3" cy="1234.3" r="35.05" fill="none" stroke="#55d6a4" stroke-width="22.499999999999996"/><path d="M797.32,1189.58 A46.3,46.3 0 0 1 802.86,1188.45 L805.99,1210.73 A23.8,23.8 0 0 0 803.14,1211.31 Z" fill="#2aabf6" stroke="#fff" stroke-width="0.6"/><path d="M802.86,1188.45 A46.3,46.3 0 0 1 804.46,1188.25 L806.81,1210.63 A23.8,23.8 0 0 0 805.99,1210.73 Z" fill="#ff8c42" stroke="#fff" stroke-width="0.6"/><path d="M804.46,1188.25 A46.3,46.3 0 0 1 806.07,1188.11 L807.64,1210.56 A23.8,23.8 0 0 0 806.81,1210.63 Z" fill="#ea4c89" stroke="#fff" stroke-width="0.6"/><path d="M806.07,1188.11 A46.3,46.3 0 0 1 808.49,1188.01 L808.88,1210.50 A23.8,23.8 0 0 0 807.64,1210.56 Z" fill="#d9b8f5" stroke="#fff" stroke-width="0.6"/></svg>
<svg class="a" style="left:0px;top:0px;" width="1600" height="1500" viewBox="0 0 1600 1500"><circle cx="1068.5" cy="1234.3" r="34.9" fill="none" stroke="#2aabf6" stroke-width="22.799999999999997"/><path d="M1062.86,1188.35 A46.3,46.3 0 0 1 1064.46,1188.18 L1066.45,1210.89 A23.5,23.5 0 0 0 1065.64,1210.98 Z" fill="#ff8c42" stroke="#fff" stroke-width="0.6"/><path d="M1064.46,1188.18 A46.3,46.3 0 0 1 1066.08,1188.06 L1067.27,1210.83 A23.5,23.5 0 0 0 1066.45,1210.89 Z" fill="#ea4c89" stroke="#fff" stroke-width="0.6"/><path d="M1066.08,1188.06 A46.3,46.3 0 0 1 1067.69,1188.01 L1068.09,1210.80 A23.5,23.5 0 0 0 1067.27,1210.83 Z" fill="#f4b0d8" stroke="#fff" stroke-width="0.6"/><path d="M1067.69,1188.01 A46.3,46.3 0 0 1 1069.31,1188.01 L1068.91,1210.80 A23.5,23.5 0 0 0 1068.09,1210.80 Z" fill="#ffffff" stroke="#fff" stroke-width="0.6"/></svg>
<div class="t" style="left:870.60px;top:1194.66px;font-size:16px;color:#171a22;letter-spacing:0.467px;">Engagement</div>
<div class="t" style="left:870.60px;top:1219.77px;font-size:28.5px;color:#171a22;font-weight:bold;letter-spacing:0.803px;">2.95M</div>
<div class="t" style="left:870.60px;top:1257.66px;font-size:16px;color:#00805f;letter-spacing:0.731px;">+2.62M</div>
<div class="t" style="left:1129.40px;top:1194.66px;font-size:16px;color:#171a22;letter-spacing:0.550px;">Impressions</div>
<div class="t" style="left:1129.40px;top:1219.77px;font-size:28.5px;color:#171a22;font-weight:bold;letter-spacing:-0.597px;">16.5M</div>
<div class="t" style="left:1129.40px;top:1257.66px;font-size:16px;color:#00805f;letter-spacing:0.351px;">+7.25M</div>
<div class="a" style="left:442px;top:1304.3px;width:1106px;height:45.7px;background:#f4f4f8"></div>
<div class="a" style="left:868px;top:1304.3px;width:130px;height:45.7px;background:#e4e5ed"></div>
<div class="a" style="left:442px;top:1350px;width:1106px;height:1px;background:#e0e1e9"></div>
<div class="t" style="left:465.00px;top:1320.15px;font-size:14px;color:#171a22;letter-spacing:0.221px;">Profile</div>
<div class="t" style="left:716.80px;top:1320.15px;font-size:14px;color:#171a22;letter-spacing:0.351px;">Audience trend</div>
<div class="t" style="left:900.60px;top:1320.15px;font-size:14px;color:#171a22;letter-spacing:0.334px;">Audience</div>
<svg class="a" style="left:0px;top:0px;" width="1600" height="1500" viewBox="0 0 1600 1500"><path d="M970,1321.4 L981.6,1321.4 M970,1325.8 L977.2,1325.8 M970,1330.2 L972.8,1330.2" stroke="#6c6e79" stroke-width="1.7" stroke-linecap="round"/></svg>
<div class="t" style="left:1079.50px;top:1320.15px;font-size:14px;color:#171a22;letter-spacing:0.146px;">Posts</div>
<div class="t" style="left:1164.20px;top:1320.15px;font-size:14px;color:#171a22;letter-spacing:0.227px;">Engagement</div>
<div class="t" style="left:1298.00px;top:1320.15px;font-size:14px;color:#171a22;letter-spacing:0.256px;">Impressions</div>
<div class="a" style="left:442px;top:1424px;width:1106px;height:1px;background:#e0e1e9"></div>
<div class="a" style="left:465px;top:1365px;width:45px;height:45px;box-sizing:border-box;border:1px solid #c3e1f5;border-radius:50%;background:#dcecf8"></div>
<div class="t" style="left:477.50px;top:1377.42px;font-size:19px;color:#006dca;letter-spacing:1.000px;">NI</div>
<div class="a" style="left:493px;top:1393px;width:23px;height:23px;background:#fff;border-radius:6px"></div>
<svg class="a" style="left:494px;top:1394px;" width="21" height="21" viewBox="0 0 21 21"><g transform="scale(0.9545454545454546)" opacity="1.0"><rect x="1.5" y="1.5" width="19" height="19" rx="5.5" fill="none" stroke="url(#igg)" stroke-width="2.2"/><circle cx="11" cy="11" r="4.6" fill="none" stroke="url(#igg)" stroke-width="2.2"/><circle cx="16.6" cy="5.5" r="1.3" fill="url(#igg)"/></g></svg>
<div class="t" style="left:529.40px;top:1366.71px;font-size:17px;color:#171a22;font-weight:bold;letter-spacing:-0.302px;">Nike</div>
<div class="t" style="left:529.40px;top:1388.81px;font-size:17px;color:#6c6e79;letter-spacing:-0.859px;">@nike</div>
<svg class="a" style="left:0px;top:0px;" width="1600" height="1500" viewBox="0 0 1600 1500"><polyline points="718.3,1397.3 722.9,1395.7 730.0,1399.0 737.0,1401.5 745.0,1403.5 752.0,1405.0 756.4,1408.1 761.6,1405.3 767.0,1406.5 772.9,1409.1 778.1,1406.0 789.4,1404.3 795.1,1401.4 800.2,1402.6 806.9,1397.3 811.6,1394.7 822.4,1393.7 832.7,1392.6 838.9,1395.0 844.6,1392.6 850.3,1393.4 855.9,1391.1 860.6,1365.3 866.2,1365.8" fill="none" stroke="#55d6a4" stroke-width="2.6" stroke-linejoin="round" stroke-linecap="round"/></svg>
<div class="t" style="left:883.00px;top:1366.61px;font-size:17px;color:#171a22;letter-spacing:0.628px;">298,302,880</div>
<div class="t" style="left:908.00px;top:1388.81px;font-size:17px;color:#00805f;letter-spacing:0.634px;">+156,328</div>
<div class="t" style="left:1105.65px;top:1366.61px;font-size:17px;color:#171a22;">8</div>
<div class="t" style="left:1095.60px;top:1388.81px;font-size:17px;color:#00805f;letter-spacing:0.125px;">+5</div>
<div class="t" style="left:1165.00px;top:1366.61px;font-size:17px;color:#171a22;letter-spacing:0.624px;">2,870,099</div>
<div class="t" style="left:1154.90px;top:1388.81px;font-size:17px;color:#00805f;letter-spacing:0.574px;">+2,591,572</div>
<div class="a" style="left:1291.7px;top:1371.4px;width:84.3px;height:31.8px;box-sizing:border-box;border:1px solid #d0d1d9;border-radius:6px;background:#f4f4f8"></div>
<div class="t" style="left:1302.00px;top:1380.11px;font-size:17px;color:#6c6e79;letter-spacing:0.115px;">Connect</div>
<svg class="a" style="left:0px;top:0px;" width="1600" height="1500" viewBox="0 0 1600 1500"><g transform="translate(0,0)" fill="none" stroke="#4a4c57" stroke-width="1.9" stroke-linejoin="round"><path d="M1443.3,1383.4 L1439.6,1383.4 L1439.6,1394.6 L1450.6,1394.6 L1450.6,1390.6"/><path d="M1444.2,1390.2 L1453.4,1381" stroke-linecap="round"/><path d="M1448,1380.6 L1453.8,1380.6 L1453.8,1386.4"/></g></svg>
<div class="a" style="left:1489.5px;top:1378.6px;width:4.4px;height:4.4px;background:#4a4c57;border-radius:50%"></div>
<div class="a" style="left:1489.5px;top:1385.3999999999999px;width:4.4px;height:4.4px;background:#4a4c57;border-radius:50%"></div>
<div class="a" style="left:1489.5px;top:1392.1px;width:4.4px;height:4.4px;background:#4a4c57;border-radius:50%"></div>
<div class="a" style="left:465px;top:1439px;width:45px;height:45px;box-sizing:border-box;border:1px solid #c3e1f5;border-radius:50%;background:#dcecf8"></div>
<div class="t" style="left:477.50px;top:1451.42px;font-size:19px;color:#006dca;letter-spacing:1.000px;">NI</div>
<div class="a" style="left:492px;top:1466px;width:24px;height:24px;border-radius:50%;background:#4a8ff0;border:1.5px solid #fff;overflow:hidden"><div class="t" style="left:7px;top:4px;font-size:24px;font-weight:bold;color:#fff;line-height:24px">f</div></div>
<div class="t" style="left:529.40px;top:1440.61px;font-size:17px;color:#171a22;font-weight:bold;letter-spacing:-0.302px;">Nike</div>
<div class="t" style="left:529.40px;top:1463.11px;font-size:17px;color:#6c6e79;letter-spacing:-0.859px;">@nike</div>
<svg class="a" style="left:0px;top:0px;" width="1600" height="1500" viewBox="0 0 1600 1500"><defs><linearGradient id="rg" x1="0" y1="0" x2="0" y2="1"><stop offset="0" stop-color="#e5363f"/><stop offset="1" stop-color="#f2a0a6"/></linearGradient></defs><polyline points="718.3,1445.2 724.4,1440.6 731.7,1440.1 737.8,1442.1 745.1,1446.3 751.2,1448.8 758.5,1454.0 763.6,1456.1 767.8,1456.6 777.0,1462.3 787.3,1466.9 795.6,1463.3 805.9,1460.7 817.2,1463.3 828.6,1469.5 836.8,1472.6 847.2,1473.6 855.4,1468.4 860.6,1476.2 866.2,1482.4" fill="none" stroke="#e8313f" stroke-width="2.6" stroke-linejoin="round" stroke-linecap="round"/></svg>
<div class="t" style="left:893.80px;top:1440.61px;font-size:17px;color:#171a22;letter-spacing:0.689px;">39,602,112</div>
<div class="t" style="left:939.80px;top:1463.41px;font-size:17px;color:#e8424b;letter-spacing:0.367px;">4,683</div>
<div class="a" style="left:931px;top:1471.4px;width:5px;height:1.6px;background:#e8424b"></div>
<div class="t" style="left:1105.65px;top:1440.61px;font-size:17px;color:#171a22;">0</div>
<div class="t" style="left:1105.65px;top:1463.11px;font-size:17px;color:#6c6e79;">0</div>
<div class="t" style="left:1236.15px;top:1440.61px;font-size:17px;color:#171a22;">0</div>
<div class="t" style="left:1236.15px;top:1463.11px;font-size:17px;color:#6c6e79;">0</div>
<div class="a" style="left:1291.7px;top:1445px;width:84.3px;height:31.8px;box-sizing:border-box;border:1px solid #d0d1d9;border-radius:6px;background:#f4f4f8"></div>
<div class="t" style="left:1302.00px;top:1453.71px;font-size:17px;color:#6c6e79;letter-spacing:0.115px;">Connect</div>
<svg class="a" style="left:0px;top:0px;" width="1600" height="1500" viewBox="0 0 1600 1500"><g transform="translate(0,73.6)" fill="none" stroke="#4a4c57" stroke-width="1.9" stroke-linejoin="round"><path d="M1443.3,1383.4 L1439.6,1383.4 L1439.6,1394.6 L1450.6,1394.6 L1450.6,1390.6"/><path d="M1444.2,1390.2 L1453.4,1381" stroke-linecap="round"/><path d="M1448,1380.6 L1453.8,1380.6 L1453.8,1386.4"/></g></svg>
<div class="a" style="left:1489.5px;top:1452.2px;width:4.4px;height:4.4px;background:#4a4c57;border-radius:50%"></div>
<div class="a" style="left:1489.5px;top:1459.0px;width:4.4px;height:4.4px;background:#4a4c57;border-radius:50%"></div>
<div class="a" style="left:1489.5px;top:1465.7px;width:4.4px;height:4.4px;background:#4a4c57;border-radius:50%"></div>
<div class="a" style="left:0;top:1459px;width:1600px;height:41px;background:linear-gradient(180deg,rgba(255,255,255,0) 0,rgba(255,255,255,0.55) 35%,rgba(255,255,255,0.9) 58%,#fff 73%,#fff 100%);z-index:10"></div>
<svg class="a" style="left:0px;top:0px;" width="1600" height="1500" viewBox="0 0 1600 1500"><g fill="none" stroke="#42444d" stroke-width="2" stroke-linecap="round" stroke-linejoin="round">
<path d="M750.3,487 L750.3,493"/>
<path d="M759.8,481.8 L755.3,486.2 Q754.2,487.4 754.2,489 L754.2,491.5 Q754.2,495 757.7,495 L761.5,495 Q762.8,495 763.4,493.8 L766.2,488.8 Q766.6,487 764.8,487 L760.3,487 L760.8,483 Q761,481 759.8,481.8 Z"/>
<path d="M795.3,483.5 L795.3,489.5"/>
<path d="M805.8,495.2 L799.8,490.6 Q798.7,489.6 798.7,488 L798.7,484.5 Q798.7,481 802.2,481 L807.5,481 Q808.6,481 809.1,482.2 L811.3,487.3 Q811.6,489.3 809.8,489.3 L805.8,489.3 L806.6,493.8 Q806.8,495.8 805.8,495.2 Z"/>
</g></svg>
</body></html>
